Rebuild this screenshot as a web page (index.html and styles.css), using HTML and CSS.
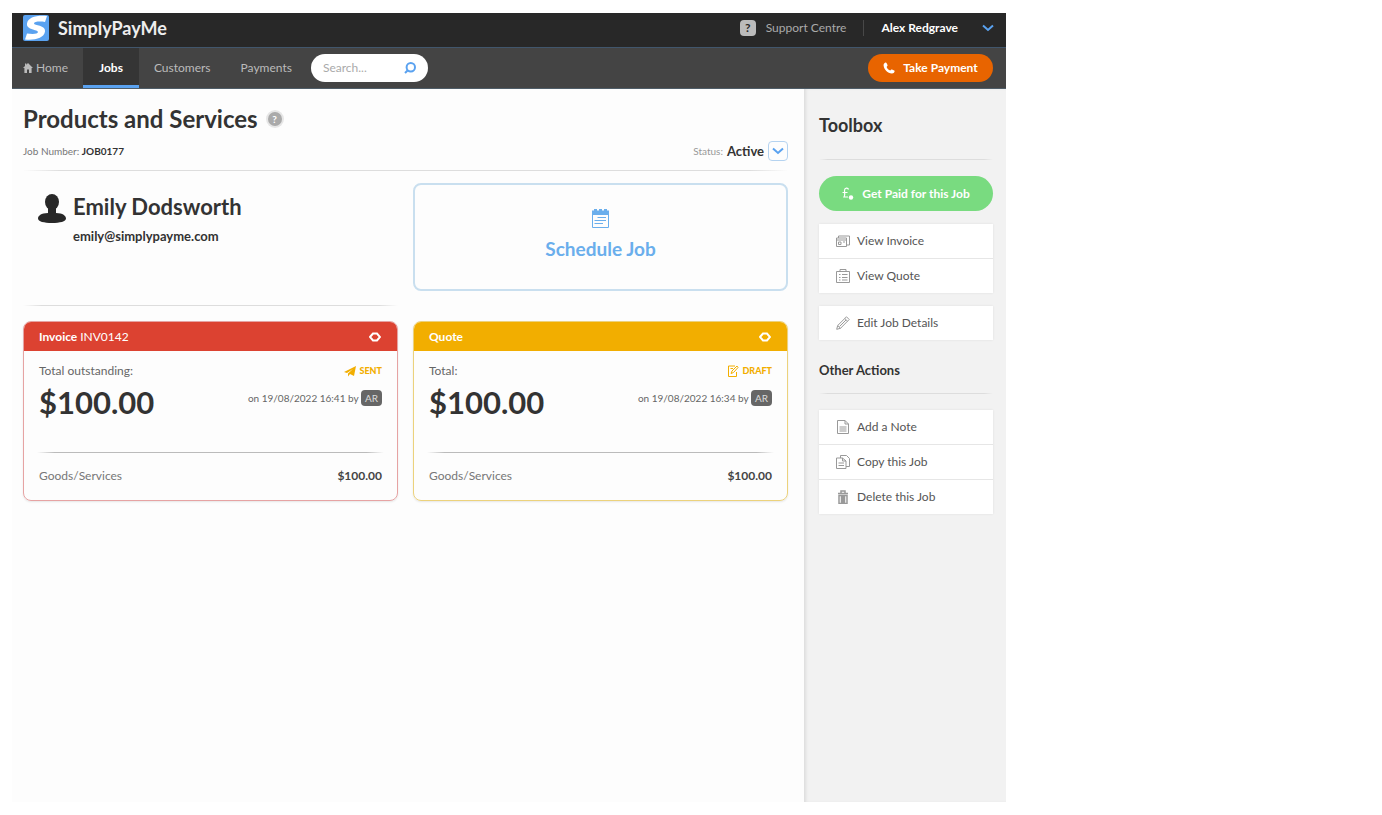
FILE: index.html
```html
<!DOCTYPE html>
<html lang="en">

<head>
  <meta charset="UTF-8" />
  <meta name="viewport" content="width=device-width, initial-scale=1" />
  <title>Products and Services - SimplyPayMe</title>
  <link rel="stylesheet" href="styles.css">
</head>

<body>

  <div class="app">

    <!-- Top bar -->
    <header class="topbar">
      <a href="#" class="brand">
        <svg class="logo" viewBox="0 0 26 26">
          <rect width="26" height="26" rx="2" fill="#5aa2f0" />
          <path d="M24 1L22 7C17 6 11 6.500 11 8.500C11 10.500 23 10 22 16.500C21 23 12 25.500 2 24.500L4 18.500C10 19.500 15 19 15 17C15 14.500 3 15 4 8.500C5 2 14 0 24 1Z" fill="#fff" />
        </svg>
        SimplyPayMe
      </a>
      <div class="account">
        <a href="#" class="support"><span class="support-icon">?</span>Support Centre</a>
        <button class="user-btn">Alex Redgrave
          <svg class="chevron" viewBox="0 0 12 8"><path d="M1 1.500L6 6L11 1.500" /></svg>
        </button>
      </div>
    </header>

    <!-- Navigation -->
    <nav class="navbar">
      <a href="#" class="home">
        <svg viewBox="0 0 10 10"><path d="M5 0L10 5H8.600V10H6V6.500H4V10H1.400V5H0L2 3V.5H3.300V1.700Z" fill="#bbb" /></svg>
        Home
      </a>
      <a href="#" class="active">Jobs</a>
      <a href="#">Customers</a>
      <a href="#">Payments</a>
      <form class="search">
        <input type="text" placeholder="Search..." aria-label="Search" />
        <button type="button" aria-label="Go">
          <svg viewBox="0 0 12 12"><circle cx="6.800" cy="5.200" r="4.200" /><path d="M3.800 8.200L1 11" /></svg>
        </button>
      </form>
      <button class="pay-btn">
        <svg viewBox="0 0 12 12"><path d="M2.500 .5C1.200 1 .4 2 .6 3.500C1 7.500 4.800 11.300 8.800 11.500C10.300 11.600 11.200 10.700 11.600 9.500C11.700 9 11.500 8.800 11.200 8.600L9 7.500C8.600 7.300 8.300 7.400 8 7.800L7.300 8.600C5.600 7.900 4.300 6.600 3.600 4.900L4.300 4.100C4.600 3.800 4.700 3.500 4.500 3.100L3.500 .9C3.300 .5 3 .3 2.500 .5Z" fill="#fff" /></svg>
        Take Payment
      </button>
    </nav>

    <div class="page">

      <!-- Main Content Area -->
      <main class="main">
        <div class="title-row">
          <h1>Products and Services</h1>
          <button class="help" aria-label="Help">?</button>
        </div>
        <div class="meta-row">
          <div class="job-number">Job Number: <b>JOB0177</b></div>
          <div class="status">Status: <b>Active</b>
            <button class="status-btn" aria-label="Change status">
              <svg class="chevron" viewBox="0 0 12 8"><path d="M1 1.500L6 6L11 1.500" /></svg>
            </button>
          </div>
        </div>
        <hr class="fade" />

        <div class="grid">
          <section class="customer">
            <svg viewBox="0 0 28 29"><ellipse cx="14" cy="8" rx="7" ry="8" /><path d="M10 12H18V19C25 19 28 22 28 24.500C28 27.500 22 29 14 29S0 27.500 0 24.500C0 22 3 19 10 19Z" /></svg>
            <div>
              <h2>Emily Dodsworth</h2>
              <p>emily@simplypayme.com</p>
            </div>
          </section>

          <button class="schedule">
            <svg viewBox="0 0 17 19"><path d="M0 1.500H2V0H5V1.500H7V0H10V1.500H12V0H15V1.500H17V6H0Z" fill="#6aaeec" /><path d="M.5 6V18.500H16.500V6M5.500 8.500H14M2.500 11.500H14M2.500 14.500H11" fill="none" stroke="#6aaeec" /></svg>
            Schedule Job
          </button>

          <section class="card invoice">
            <div class="card-head">
              <h3>Invoice <span>INV0142</span></h3>
              <button aria-label="View invoice"><svg viewBox="0 0 12 10"><path d="M1 5L4 1.500H8L11 5L8 8.500H4Z" /></svg></button>
            </div>
            <div class="card-body">
              <div class="row">
                <span>Total outstanding:</span>
                <span class="badge">
                  <svg viewBox="0 0 12 12"><path d="M0 7L12 1L10 11L6 9L4 11.500V8.500L9 4L3 8Z" fill="#f2ae00" /></svg>
                  SENT
                </span>
              </div>
              <div class="row amount-row">
                <span class="amount">$100.00</span>
                <span class="date">on 19/08/2022 16:41 by <abbr>AR</abbr></span>
              </div>
              <hr class="fade" />
              <div class="row">
                <span class="label">Goods/Services</span>
                <b>$100.00</b>
              </div>
            </div>
          </section>

          <section class="card quote">
            <div class="card-head">
              <h3>Quote</h3>
              <button aria-label="View quote"><svg viewBox="0 0 12 10"><path d="M1 5L4 1.500H8L11 5L8 8.500H4Z" /></svg></button>
            </div>
            <div class="card-body">
              <div class="row">
                <span>Total:</span>
                <span class="badge">
                  <svg viewBox="0 0 12 12"><path d="M8 1H1.500V11.500H9.500V7M3.500 3.500H6M4 8.500L5 6L10 1L11 2.500L6.500 7.500Z" fill="none" stroke="#f2ae00" /></svg>
                  DRAFT
                </span>
              </div>
              <div class="row amount-row">
                <span class="amount">$100.00</span>
                <span class="date">on 19/08/2022 16:34 by <abbr>AR</abbr></span>
              </div>
              <hr class="fade" />
              <div class="row">
                <span class="label">Goods/Services</span>
                <b>$100.00</b>
              </div>
            </div>
          </section>
        </div>
      </main>

      <!-- Toolbox -->
      <aside class="toolbox">
        <h2>Toolbox</h2>
        <hr class="fade" />
        <button class="paid-btn">
          <svg viewBox="0 0 12 13"><path d="M6.500 2.500C6 .5 2.500 .5 2.500 3.500C2.500 6 3.500 7 2 10H6M.5 5.500H5.500" fill="none" stroke="#fff" stroke-width="1.200" /><circle cx="9" cy="10.500" r="2.200" fill="#fff" /></svg>
          Get Paid for this Job
        </button>
        <ul>
          <li><a href="#">
            <svg viewBox="0 0 14 14"><path d="M.5 4H10.500V12.500H.5ZM2.500 4V2H13.500V11H10.500M.5 6H10.500M2.500 8H5V10.500H2.500ZM7 8H9" /></svg>
            View Invoice</a></li>
          <li><a href="#">
            <svg viewBox="0 0 14 14"><path d="M.5 2.500H13.500V13.500H.5ZM4 2.500V.5H10V2.500M3 5.500H4.500M6 5.500H11.500M3 8.500H4.500M6 8.500H11.500M3 11H4.500M6 11H11.500" /></svg>
            View Quote</a></li>
        </ul>
        <ul>
          <li><a href="#">
            <svg viewBox="0 0 14 14"><path d="M.7 13.300L1.700 9.500L10.500 .8L13.200 3.500L4.500 12.300ZM1.700 9.500L4.500 12.300M8.800 2.500L11.500 5.200M3.500 10.500L10 4" /></svg>
            Edit Job Details</a></li>
        </ul>
        <h3>Other Actions</h3>
        <hr class="fade" />
        <ul>
          <li><a href="#">
            <svg viewBox="0 0 14 14"><path d="M1.500 .5H9L12.500 4V13.500H1.500ZM9 .5V4H12.500M3.500 7H10.500M3.500 9H10.500M3.500 11H10.500" /></svg>
            Add a Note</a></li>
          <li><a href="#">
            <svg viewBox="0 0 14 14"><path d="M4.500 3V.5H10.500L13.500 3.500V11.500H10M.5 3H6.500L10 6V13.500H.5ZM6.500 3V6H10M2.500 8H8M2.500 10.500H8" /></svg>
            Copy this Job</a></li>
          <li><a href="#">
            <svg viewBox="0 0 14 14"><path d="M2 3.500H12M5 3V1H9V3M3 5.500H11V13.500H3ZM5.500 6V13M7 6V13M8.500 6V13" stroke-width="1.500" /></svg>
            Delete this Job</a></li>
        </ul>
      </aside>
    </div>
  </div>

</body>

</html>
```
FILE: styles.css
```css
* {
  box-sizing: border-box;
}

body {
  margin: 0;
  padding: 13px 12px;
  background: #fff;
  color: #333;
  font-family: Lato, 'Liberation Sans', sans-serif;
  font-size: 12px;
  line-height: 16px;
}

h1, h2, h3, p, ul {
  margin: 0;
  padding: 0;
}

a {
  color: inherit;
  text-decoration: none;
}

button {
  padding: 0;
  border: none;
  background: none;
  color: inherit;
  font: inherit;
  cursor: pointer;
}

svg {
  display: block;
  flex-shrink: 0;
}

.app {
  display: flex;
  flex-direction: column;
  max-width: 994px;
  min-height: calc(100vh - 26px);
}

.fade {
  width: 100%;
  height: 1px;
  margin: 0;
  border: none;
  background: linear-gradient(to right, transparent, #ddd 5%, #ddd 95%, transparent);
}

.chevron {
  width: 12px;
  height: 8px;
  fill: none;
  stroke: #5aa2f0;
  stroke-width: 2;
}

/* Top bar */
.topbar {
  display: flex;
  justify-content: space-between;
  height: 34px;
  padding: 0 12px 4px 11px;
  background: #282828;
  color: #fff;
}

.brand {
  display: flex;
  align-items: center;
  gap: 9px;
  font-size: 18px;
  font-weight: bold;
  color: #eee;
}

.logo {
  width: 26px;
  height: 26px;
}

.account,
.support,
.user-btn {
  display: flex;
  align-items: center;
}

.support {
  gap: 10px;
  padding-right: 17px;
  border-right: 1px solid #484848;
  color: #aaa;
}

.support-icon {
  width: 16px;
  border-radius: 4px;
  background: #bbb;
  color: #282828;
  font-weight: bold;
  text-align: center;
}

.user-btn {
  gap: 24px;
  padding-left: 17px;
  font-weight: bold;
}

/* Navigation */
.navbar {
  display: flex;
  align-items: center;
  height: 42px;
  padding-right: 13px;
  border-top: 1px solid #41566c;
  border-bottom: 1px solid #4f5d68;
  background: #444;
  color: #bbb;
}

.navbar > a {
  display: flex;
  align-items: center;
  height: 40px;
  padding: 0 15px;
}

.navbar .home {
  gap: 3px;
  padding-left: 11px;
}

.home svg {
  width: 10px;
  height: 10px;
}

.navbar .active {
  padding: 0 16px;
  border-top: 3px solid #353535;
  border-bottom: 3px solid #5aa2f0;
  background: #353535;
  color: #fff;
  font-weight: bold;
}

.search {
  display: flex;
  align-items: center;
  width: 117px;
  height: 28px;
  margin-left: 4px;
  padding: 0 12px;
  border-radius: 14px;
  background: #fff;
}

.search input {
  flex: 1;
  min-width: 0;
  padding: 0;
  border: none;
  outline: none;
  background: none;
  font: inherit;
}

.search input::placeholder {
  color: #aaa;
}

.search svg {
  width: 12px;
  height: 12px;
  fill: none;
  stroke: #5aa2f0;
  stroke-width: 2;
}

.pay-btn {
  display: flex;
  align-items: center;
  justify-content: center;
  gap: 8px;
  width: 125px;
  height: 28px;
  margin-left: auto;
  border-radius: 14px;
  background: #e86400;
  color: #fff;
  font-weight: bold;
}

.pay-btn svg {
  width: 12px;
  height: 12px;
}

/* Page */
.page {
  display: flex;
  flex: 1;
}

.main {
  flex: 1;
  padding: 16px 16px 16px 11px;
  background: #fdfdfd;
}

.title-row {
  display: flex;
  align-items: center;
  gap: 10px;
}

h1 {
  font-size: 24px;
  line-height: 28px;
}

.help {
  width: 14px;
  border-radius: 50%;
  background: #aaa;
  box-shadow: 0 0 0 2px #e6e6e6;
  color: #fff;
  font-size: 10px;
  font-weight: bold;
  line-height: 14px;
}

.meta-row {
  display: flex;
  align-items: center;
  justify-content: space-between;
  margin: 8px 0 9px;
}

.job-number {
  color: #777;
  font-size: 10px;
}

.job-number b,
.status b {
  color: #333;
}

.status {
  display: flex;
  align-items: center;
  gap: 4px;
  color: #999;
  font-size: 10px;
}

.status b {
  font-size: 13px;
}

.status-btn {
  display: flex;
  align-items: center;
  justify-content: center;
  width: 20px;
  height: 20px;
  border: 1px solid #b5d3f0;
  border-radius: 4px;
}

.grid {
  display: grid;
  grid-template-columns: 1fr 1fr;
  gap: 15px;
  margin-top: 12px;
}

/* Customer */
.customer {
  display: flex;
  gap: 7px;
  height: 123px;
  padding: 11px 15px;
  background: linear-gradient(to right, transparent, #ddd 5%, #ddd 95%, transparent) bottom / 100% 1px no-repeat;
}

.customer svg {
  width: 28px;
  height: 29px;
  fill: #282828;
}

.customer h2 {
  font-size: 22px;
  line-height: 26px;
}

.customer p {
  margin-top: 8px;
  font-size: 13px;
  font-weight: bold;
}

.schedule {
  display: flex;
  flex-direction: column;
  align-items: center;
  justify-content: center;
  gap: 10px;
  height: 108px;
  padding-bottom: 6px;
  border: 2px solid #c9dfef;
  border-radius: 8px;
  color: #6aaeec;
  font-size: 19px;
  font-weight: bold;
  line-height: 22px;
}

.schedule svg {
  width: 17px;
  height: 19px;
}

/* Invoice and quote cards */
.card {
  border: 1px solid;
  border-radius: 8px;
  box-shadow: 0 1px 2px #e6e6e6;
  overflow: hidden;
}

.invoice {
  border-color: #e6a3a3;
}

.quote {
  border-color: #ecd27c;
}

.card-head {
  display: flex;
  align-items: center;
  justify-content: space-between;
  height: 29px;
  padding: 0 16px 0 15px;
  color: #fff;
}

.invoice .card-head {
  background: #dc4231;
}

.quote .card-head {
  background: #f2ae00;
}

.card-head h3 {
  font-size: 12px;
}

.card-head span {
  font-weight: normal;
}

.card-head svg {
  width: 12px;
  height: 10px;
  fill: none;
  stroke: #fff;
  stroke-width: 2;
}

.card-body {
  padding: 12px 13px 16px;
}

.card .row {
  display: flex;
  align-items: center;
  justify-content: space-between;
  padding: 0 2px;
  color: #666;
}

.card .row b {
  color: #444;
}

.badge {
  display: flex;
  align-items: center;
  gap: 3px;
  color: #f2ae00;
  font-size: 9px;
  font-weight: 900;
}

.badge svg {
  width: 12px;
  height: 12px;
}

.card .amount-row {
  align-items: flex-start;
  height: 62px;
  padding-top: 4px;
}

.amount {
  color: #333;
  font-size: 31px;
  font-weight: bold;
  line-height: 38px;
}

.date {
  margin-top: 7px;
  font-size: 10px;
}

.date abbr {
  display: inline-block;
  padding: 0 4px;
  border-radius: 4px;
  background: #666;
  color: #ddd;
}

.card .fade {
  margin: 11px 0 15px;
  background: linear-gradient(to right, transparent, #bbb 5%, #bbb 95%, transparent);
}

.card .row .label {
  color: #777;
}

/* Toolbox */
.toolbox {
  width: 202px;
  padding: 26px 13px 0 15px;
  background: #f2f2f2;
  box-shadow: inset 3px 0 3px -1px #ddd;
}

.toolbox h2 {
  margin-bottom: 24px;
  font-size: 18px;
  line-height: 20px;
}

.toolbox h3 {
  margin: 22px 0 15px;
  font-size: 13px;
}

.paid-btn {
  display: flex;
  align-items: center;
  justify-content: center;
  gap: 8px;
  width: 100%;
  height: 35px;
  margin-top: 16px;
  border-radius: 18px;
  background: #79db80;
  color: #fff;
  font-weight: bold;
}

.paid-btn svg {
  width: 12px;
  height: 13px;
}

.toolbox ul {
  margin-top: 13px;
  background: #fff;
  box-shadow: 0 0 2px #ddd;
  list-style: none;
}

.toolbox .fade + ul {
  margin-top: 16px;
}

.toolbox li + li {
  border-top: 1px solid #e6e6e6;
}

.toolbox li a {
  display: flex;
  align-items: center;
  gap: 7px;
  height: 34px;
  padding: 0 17px;
  color: #555;
}

.toolbox li svg {
  width: 14px;
  height: 14px;
  fill: none;
  stroke: #999;
}
```
